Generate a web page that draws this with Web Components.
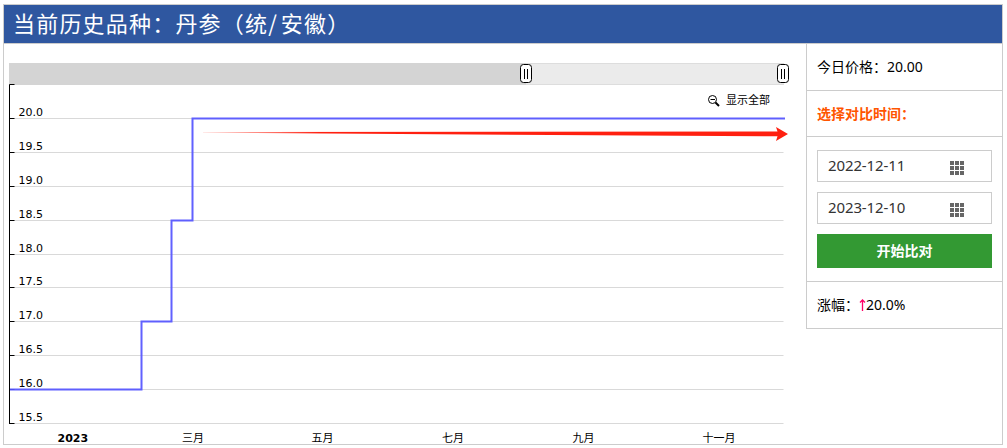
<!DOCTYPE html>
<html lang="zh-CN">
<head>
<meta charset="utf-8">
<title>历史价格</title>
<style>
body{
    margin: 0;
    background: #fff;
    color: #000;
    font: 14px/20px "Noto Sans", "Noto Sans CJK SC", sans-serif;
}

.slash{ letter-spacing: 4px; }
</style>
</head>
<body>
<price-history>
    <span slot="title">当前历史品种：丹参（统<span class="slash">/</span>安徽<span>）</span></span>
    <price-chart></price-chart>
    <compare-panel slot="side" price="20.00" change="20.0%">
        <date-field value="2022-12-11"></date-field>
        <date-field value="2023-12-10"></date-field>
    </compare-panel>
</price-history>

<script>
class PriceHistory extends HTMLElement {
    constructor() {
        super()
        this.attachShadow({mode: "open"})
        this.render()
    }

    style(){
        return /*css*/`
        :host{
            display: flex;
            flex-direction: column;
            box-sizing: border-box;
            width: 1000px;
            height: 441px;
            margin: 4px 0 0 3px;
            border: 1px solid #ccc;
        }

        header{
            box-sizing: border-box;
            height: 39px;
            padding-left: 9px;
            border-bottom: 1px solid #ccc;
            background: #2f57a0;
            color: #fff;
            font: 22px/35px "Noto Sans CJK SC", sans-serif;
            letter-spacing: 1.2px;
            white-space: nowrap;
        }

        main{
            display: flex;
            flex: 1;
            align-items: flex-start;
        }
        `
    }

    render(){
        this.shadowRoot.innerHTML = /*html*/`
        <style>${this.style()}</style>
        <header><slot name="title"></slot></header>
        <main>
            <slot></slot>
            <slot name="side"></slot>
        </main>
    `
    }
}

class PriceChart extends HTMLElement {
    constructor() {
        super()
        this.attachShadow({mode: "open"})
        this.render()
    }

    style(){
        return /*css*/`
        :host{
            display: block;
            width: 802px;
            height: 400px;
        }

        svg{ display: block; }

        text{
            font: 11px "DejaVu Sans", "Noto Sans CJK SC", sans-serif;
            fill: #000;
        }

        .year{ font-weight: bold; }
        .month{ text-anchor: middle; }
        `
    }

    rows(){
        const lines = [118, 152, 186, 220, 254, 287, 321, 355, 389, 423]
        return lines.map((y, i) => `
        <path d="M10 ${y + .5}H783.5" stroke="#d9d9d9"/>
        <path d="M9 ${y + .5}H14.5" stroke="#000"/>
        <text x="18.4" y="${y - 2}">${(20 - i * .5).toFixed(1)}</text>`).join('')
    }

    months(){
        const items = [[193, "三月"], [322.5, "五月"], [453, "七月"], [583.5, "九月"], [719, "十一月"]]
        return items.map(([x, label]) => `<text class="month" x="${x}" y="442">${label}</text>`).join('')
    }

    grip(x){
        return `
        <g transform="translate(${x} 64)" stroke="#000">
            <rect x=".5" y=".5" width="11" height="18" rx="3" fill="#fff"/>
            <path d="M4.5 5V15M7.5 5V15"/>
        </g>`
    }

    render(){
        this.shadowRoot.innerHTML = /*html*/`
        <style>${this.style()}</style>
        <svg width="802" height="400" viewBox="4 44 802 400" fill="none">
            <defs>
                <linearGradient id="fade" gradientUnits="userSpaceOnUse" x1="200" y1="0" x2="320" y2="0">
                    <stop offset="0" stop-color="#ff2010" stop-opacity=".1"/>
                    <stop offset="1" stop-color="#ff2010"/>
                </linearGradient>
            </defs>
            <rect x="9" y="63" width="517" height="22" fill="#d4d4d4"/>
            <rect x="526" y="63" width="258" height="22" fill="#ebebeb"/>
            <path d="M526 63.5H784M526 84.5H784" stroke="#ddd"/>
            ${this.grip(520)}
            ${this.grip(777)}
            ${this.rows()}
            <path d="M14.5 84.5H9.5V424" stroke="#000"/>
            <path d="M10 389.5H141.5V321.5H171.5V220.5H192.5V118.5H785" stroke="#5555ff" stroke-opacity=".93" stroke-width="2"/>
            <path d="M203 132L777.5 131.5L776 127L788 134L776 141L777.5 136.3L203 132.8Z" fill="url(#fade)"/>
            <circle cx="712.5" cy="99.5" r="4" stroke="#000"/>
            <path d="M710.5 99.5H715" stroke="#000"/>
            <path d="M715.5 102.5L719 106" stroke="#000" stroke-width="2"/>
            <text x="726" y="104">显示全部</text>
            <text class="year" x="57.5" y="442">2023</text>
            ${this.months()}
        </svg>
    `
    }
}

class DateField extends HTMLElement {
    constructor() {
        super()
        this.attachShadow({mode: "open"})
        this.render()
    }

    style(){
        return /*css*/`
        :host{
            display: flex;
            align-items: center;
            justify-content: space-between;
            box-sizing: border-box;
            height: 32px;
            margin-bottom: 10px;
            padding: 0 27px 0 10px;
            border: 1px solid #ccc;
            color: #333;
            font-size: 15px;
            letter-spacing: -.12px;
        }

        span{ padding-bottom: 2px; }
        svg{ margin-top: 4px; }
        `
    }

    render(){
        const cells = []
        for (let y = 0; y < 3; y++) {
            for (let x = 0; x < 3; x++) {
                cells.push(`<rect x="${x * 5}" y="${y * 5}" width="4" height="4"/>`)
            }
        }
        this.shadowRoot.innerHTML = /*html*/`
        <style>${this.style()}</style>
        <span>${this.getAttribute("value")}</span>
        <svg width="14" height="14" fill="#666">${cells.join('')}</svg>
    `
    }
}

class ComparePanel extends HTMLElement {
    constructor() {
        super()
        this.attachShadow({mode: "open"})
        this.render()
    }

    style(){
        return /*css*/`
        :host{
            display: block;
            box-sizing: border-box;
            width: 196px;
            border-left: 1px solid #ccc;
        }

        .row{
            display: flex;
            align-items: center;
            box-sizing: border-box;
            height: 47px;
            padding: 0 10px;
            border-bottom: 1px solid #ccc;
            white-space: nowrap;
        }

        .label{
            height: 46px;
            color: #ff5500;
            font-weight: bold;
        }

        .form{
            box-sizing: border-box;
            height: 145px;
            padding: 13px 10px;
            border-bottom: 1px solid #ccc;
        }

        button{
            display: block;
            width: 100%;
            height: 34px;
            padding: 0 0 2px;
            border: 0;
            background: #339933;
            color: #fff;
            font: bold 14px "Noto Sans CJK SC", sans-serif;
        }

        .up{
            width: 7px;
            height: 12px;
        }
        `
    }

    render(){
        this.shadowRoot.innerHTML = /*html*/`
        <style>${this.style()}</style>
        <div class="row">今日价格：${this.getAttribute("price")}</div>
        <div class="row label">选择对比时间：</div>
        <div class="form">
            <slot></slot>
            <button>开始比对</button>
        </div>
        <div class="row">涨幅：<svg class="up" viewBox="0 0 7 12" fill="none" stroke="#ff0066" stroke-width="1.3"><path d="M3.5 12V1M1 3.5L3.5 1L6 3.5"/></svg>${this.getAttribute("change")}</div>
    `
    }
}

customElements.define("price-history", PriceHistory)
customElements.define("price-chart", PriceChart)
customElements.define("date-field", DateField)
customElements.define("compare-panel", ComparePanel)
</script>
</body>
</html>
